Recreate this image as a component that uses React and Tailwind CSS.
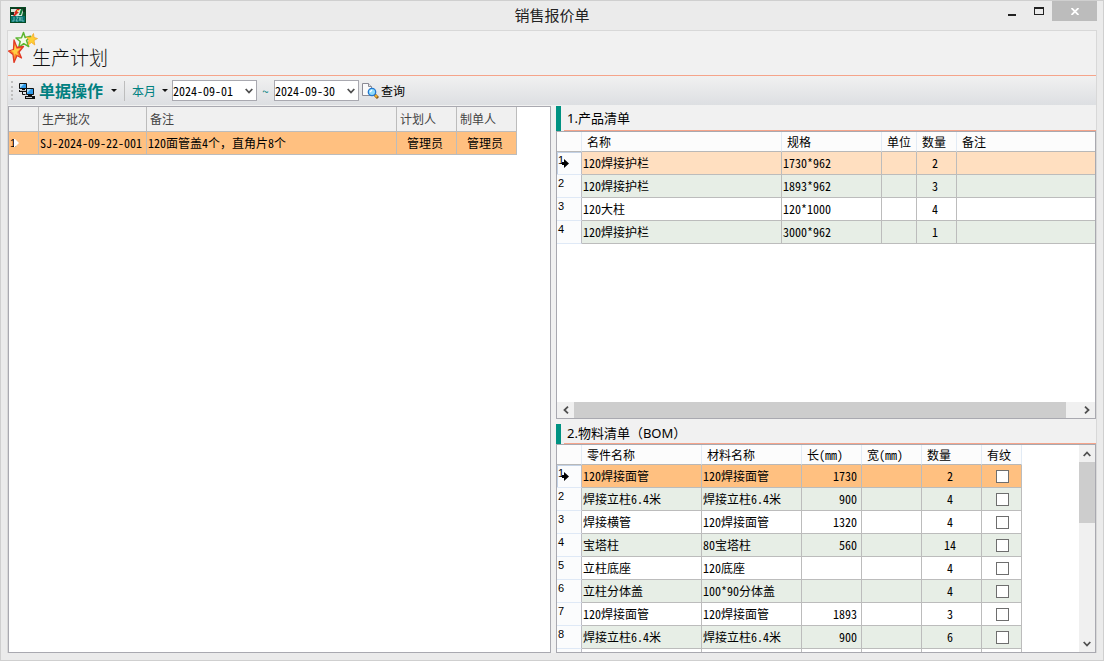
import clsx from "clsx"

const productRows = [
    { name: "120焊接护栏", spec: "1730*962", unit: "", qty: 2, remark: "" },
    { name: "120焊接护栏", spec: "1893*962", unit: "", qty: 3, remark: "" },
    { name: "120大柱", spec: "120*1000", unit: "", qty: 4, remark: "" },
    { name: "120焊接护栏", spec: "3000*962", unit: "", qty: 1, remark: "" },
]

const bomRows = [
    { part: "120焊接面管", material: "120焊接面管", length: 1730, qty: 2 },
    { part: "焊接立柱6.4米", material: "焊接立柱6.4米", length: 900, qty: 4 },
    { part: "焊接横管", material: "120焊接面管", length: 1320, qty: 4 },
    { part: "宝塔柱", material: "80宝塔柱", length: 560, qty: 14 },
    { part: "立柱底座", material: "120底座", length: "", qty: 4 },
    { part: "立柱分体盖", material: "100*90分体盖", length: "", qty: 4 },
    { part: "120焊接面管", material: "120焊接面管", length: 1893, qty: 3 },
    { part: "焊接立柱6.4米", material: "焊接立柱6.4米", length: 900, qty: 6 },
    { part: "", material: "", length: "", qty: "" },
]

const AppLogo = () => (
    <svg width="16" height="16" viewBox="0 0 16 16" className="block">
        <rect width="16" height="16" fill="#064a22" />
        <rect x="1" y="1" width="14" height="8" fill="#d9e6dc" />
        <path d="M1 1h14v1H1z M1 8h3V5H1z M12 2h3v3h-2z" fill="#12331f" />
        <path d="M4 6 7 2h3L7 5h2L5 9H3l2-3z" fill="#d8261b" />
        <path d="M7 3h2L7 5z" fill="#f2d23a" />
        <path d="M11 2h2l-2 6H9l1-3z" fill="#087a35" />
        <path d="M13 5h2v4h-3z" fill="#0b5a2c" />
        <rect x="1" y="9" width="14" height="6" fill="#06726d" />
        <path d="M4 10v4H2M6 10h2l-2 4h2M9 10l2 4M11 10l-2 4M12 10v4h2" fill="none" stroke="#8fd0cd" strokeWidth="0.7" />
    </svg>
)

const StarsIcon = () => (
    <svg width="30" height="32" viewBox="0 0 30 32" className="block">
        <path d="M15.500 1.500l1.600 5 5.400-1.200-4 4.200 2.200 6-5-2.800-5 3.800 1.500-6-4.200-3.500 5.500-.2z" fill="#f4fbe8" stroke="#5cb531" strokeWidth="1.500" strokeLinejoin="round" />
        <path d="M25.500 2.500l.5 4 3.500 1-3.500 2 .8 4.500-3.300-2.500-3.500 2.500 1-5-2.500-3 4.500.5z" fill="#fdd035" stroke="#f4a72a" strokeWidth="0.8" strokeLinejoin="round" />
        <path d="M6 9l3 7.500 6.500-1-4.500 5.500 2.500 6-4.500-2.500L6 31.500l-1-8-4.500-3.500 5-1.500z" fill="#f98a2b" stroke="#e23a26" strokeWidth="1.300" strokeLinejoin="round" />
        <path d="M7 14l1.500 4 4-.5-3.500 3.500 1 3.500-3-2-1 3-.5-4-2.500-2 3-.5z" fill="#ffce45" />
    </svg>
)

const ComputersIcon = () => (
    <svg width="16" height="16" viewBox="0 0 16 16" className="block">
        <path d="M.5 .5h7v5h-7z" fill="#2f9bea" stroke="#111" />
        <path d="M1 1h4L1 5z" fill="#a8ddfb" />
        <path d="M0 7h9v2H0z M3 6h3v1H3z" fill="#111" />
        <path d="M1 7h6v1H1z" fill="#c9c9c9" />
        <path d="M3.500 9v2.500h3" fill="none" stroke="#111" />
        <path d="M7.500 5.500h7v6h-7z" fill="#2f9bea" stroke="#111" />
        <path d="M8 6h4l-4 4z" fill="#a8ddfb" />
        <path d="M6 13h10v3H6z M9 12h4v1H9z" fill="#111" />
        <path d="M7 14h6v1H7z" fill="#c9c9c9" />
    </svg>
)

const SearchPageIcon = () => (
    <svg width="17" height="16" viewBox="0 0 17 16" className="block">
        <path d="M.5 .5h6l3 3v9h-9z" fill="#fafafa" stroke="#8b8b95" />
        <path d="M6.500 .5v3h3" fill="#e3e3e8" stroke="#8b8b95" />
        <path d="M12 11l4 4" stroke="#8a5a14" strokeWidth="3" />
        <path d="M13 12l2 2" stroke="#f0b02c" strokeWidth="2" />
        <circle cx="10" cy="9" r="3.700" fill="#8fdcfb" stroke="#2277cf" strokeWidth="1.300" />
        <path d="M8 9l2-2" stroke="#fff" strokeWidth="1.200" />
    </svg>
)

const Chevron = ({ className }) => (
    <svg width="8" height="8" viewBox="0 0 8 8" className={clsx("block", className)}>
        <path d="M.7 2l3.300 3.500L7.300 2" fill="none" stroke="#505050" strokeWidth="1.800" />
    </svg>
)

const Caret = () => (
    <svg width="6" height="3" viewBox="0 0 6 3" className="block">
        <path d="M0 0h6L3 3z" fill="#111" />
    </svg>
)

const DateSelect = ({ label, value }) => (
    <div className="relative">
        <select
            aria-label={label}
            defaultValue={value}
            className="block h-[21px] w-[85px] appearance-none border border-[#a9a9b0] bg-white text-xs text-black"
        >
            <option>{value}</option>
        </select>
        <Chevron className="pointer-events-none absolute right-1 top-[7px]" />
    </div>
)

const SectionTitle = ({ children, className }) => (
    <div className="flex shrink-0">
        <div className="w-[5px] bg-[#009282]" />
        <h2 className={clsx("ml-[3px] flex-1 border-b border-[#f5a48a] pl-[3px] font-['Noto_Sans','Noto_Sans_CJK_SC',sans-serif] text-[13px] text-black", className)}>
            {children}
        </h2>
    </div>
)

const HeadCell = ({ children, className }) => (
    <th className={clsx("h-5 border-b border-r border-b-[#b8b8b8] border-r-[#e2ebf5] bg-[#fcfcfc] p-0 pl-[5px] text-left font-normal", className)}>
        {children}
    </th>
)

const Cell = ({ children, className }) => (
    <td className={clsx("h-[23px] overflow-hidden border-b border-r border-[#bcbcbc] p-0 pl-px", className)}>
        {children}
    </td>
)

// grey gutter on the left of each grid with the row number and current-row marker
const RowNumber = ({ number, current }) => (
    <td
        className={clsx(
            "h-[23px] border-b border-r border-b-[#dfe9f6] border-r-[#bcbcc4] bg-[#fbfcfd] p-0 align-top",
            current && "shadow-[inset_1px_1px_0_#c3d2e6]"
        )}
    >
        <div className="flex pl-px font-['Liberation_Sans',sans-serif] text-[11px] leading-4">
            <span className={current ? "w-1" : ""}>{number}</span>
            {current && (
                <svg width="7" height="9" viewBox="0 0 7 9" className="mt-[7px] block">
                    <path d="M0 3h2V0l5 4.500L2 9V6H0z" fill="#000" />
                </svg>
            )}
        </div>
    </td>
)

const rowColor = (index, selected) => (index === 0 ? selected : index % 2 ? "bg-[#e7eee6]" : "bg-white")

const PlanTable = () => (
    <table className="w-[508px] table-fixed border-separate border-spacing-0">
        <colgroup>
            <col className="w-[30px]" />
            <col className="w-[108px]" />
            <col className="w-[250px]" />
            <col className="w-[60px]" />
            <col className="w-[60px]" />
        </colgroup>
        <thead>
            <tr className="bg-[#f0f0f0] text-[#444]">
                <th className="h-[25px] border-b border-r border-[#bcbcbc]" aria-label="行号" />
                {["生产批次", "备注", "计划人", "制单人"].map((title) => (
                    <th key={title} className="border-b border-r border-[#bcbcbc] p-0 pl-[3px] text-left font-normal">{title}</th>
                ))}
            </tr>
        </thead>
        <tbody>
            <tr className="bg-[#ffc080] whitespace-nowrap">
                <Cell>
                    <div className="flex items-center font-['Liberation_Sans',sans-serif] text-[11px] leading-4">
                        <span className="w-1">1</span>
                        <svg width="5" height="8" viewBox="0 0 5 8" className="block">
                            <path d="M0 0h1l4 4-4 4H0z" fill="#fff" />
                        </svg>
                    </div>
                </Cell>
                <Cell>SJ-2024-09-22-001</Cell>
                <Cell>120面管盖4个，直角片8个</Cell>
                <Cell className="pr-1 text-center">管理员</Cell>
                <Cell className="pr-1 text-center">管理员</Cell>
            </tr>
        </tbody>
    </table>
)

const ProductTable = () => (
    <table className="w-full table-fixed border-separate border-spacing-0">
        <colgroup>
            <col className="w-[25px]" />
            <col className="w-[200px]" />
            <col className="w-[100px]" />
            <col className="w-[35px]" />
            <col className="w-10" />
            <col />
        </colgroup>
        <thead>
            <tr>
                <HeadCell className="border-r-[#bcbcbc]" />
                <HeadCell>名称</HeadCell>
                <HeadCell>规格</HeadCell>
                <HeadCell>单位</HeadCell>
                <HeadCell>数量</HeadCell>
                <HeadCell className="border-r-0">备注</HeadCell>
            </tr>
        </thead>
        <tbody>
            {productRows.map((row, index) => (
                <tr key={index} className={rowColor(index, "bg-[#ffdfc0]")}>
                    <RowNumber number={index + 1} current={index === 0} />
                    <Cell>{row.name}</Cell>
                    <Cell>{row.spec}</Cell>
                    <Cell>{row.unit}</Cell>
                    <Cell className="pr-1 text-center">{row.qty}</Cell>
                    <Cell className="border-r-0">{row.remark}</Cell>
                </tr>
            ))}
        </tbody>
    </table>
)

const BomTable = () => (
    <table className="w-[465px] table-fixed border-separate border-spacing-0">
        <colgroup>
            <col className="w-[25px]" />
            <col className="w-[120px]" />
            <col className="w-[100px]" />
            <col className="w-[60px]" />
            <col className="w-[60px]" />
            <col className="w-[60px]" />
            <col className="w-10" />
        </colgroup>
        <thead>
            <tr>
                <HeadCell className="border-r-[#bcbcbc]" />
                <HeadCell>零件名称</HeadCell>
                <HeadCell>材料名称</HeadCell>
                <HeadCell>长(mm)</HeadCell>
                <HeadCell>宽(mm)</HeadCell>
                <HeadCell>数量</HeadCell>
                <HeadCell>有纹</HeadCell>
            </tr>
        </thead>
        <tbody>
            {bomRows.map((row, index) => (
                <tr key={index} className={rowColor(index, "bg-[#ffc080]")}>
                    <RowNumber number={row.part ? index + 1 : ""} current={index === 0} />
                    <Cell>{row.part}</Cell>
                    <Cell>{row.material}</Cell>
                    <Cell className="pr-1 text-right">{row.length}</Cell>
                    <Cell />
                    <Cell className="pr-1 text-center">{row.qty}</Cell>
                    <Cell>
                        <input
                            type="checkbox"
                            aria-label={`有纹 ${index + 1}`}
                            className="mx-auto block size-[13px] appearance-none border border-[#6e6e6e] bg-white"
                        />
                    </Cell>
                </tr>
            ))}
        </tbody>
    </table>
)

const App = () => {
    return (
        <div className="flex h-screen flex-col overflow-hidden border border-[#cfcfcf] bg-[#ebebeb] px-1.5 pb-[7px] font-['Noto_Sans_Mono_CJK_SC','Noto_Sans_CJK_SC',monospace] text-xs leading-4 text-black">
            <header className="grid h-[29px] shrink-0 grid-cols-[1fr_auto_1fr]">
                <div className="pl-[3px] pt-1.5">
                    <AppLogo />
                </div>
                <h1 className="pt-1 font-['Noto_Sans_CJK_SC',sans-serif] text-[15px] leading-5 text-[#222]">销售报价单</h1>
                <div className="flex items-start justify-end">
                    <button aria-label="最小化" className="flex h-5 w-7 items-center justify-center">
                        <svg width="8" height="10" viewBox="0 0 8 10"><path d="M0 8h8v2H0z" fill="#222" /></svg>
                    </button>
                    <button aria-label="最大化" className="flex h-5 w-[26px] items-center justify-center">
                        <svg width="10" height="8" viewBox="0 0 10 8"><path d="M0 0h10v8H0zM1 2v5h8V2z" fill="#222" fillRule="evenodd" /></svg>
                    </button>
                    <button aria-label="关闭" className="flex h-5 w-[45px] items-center justify-center bg-[#bcbcbc]">
                        <svg width="8" height="7" viewBox="0 0 8 7"><path d="M.5 0l7 7M7.500 0l-7 7" stroke="#fff" strokeWidth="1.800" /></svg>
                    </button>
                </div>
            </header>

            <main className="flex min-h-0 flex-1 flex-col border border-b-0 border-[#d8d8d8] bg-[#f1f1f1]">
                <div className="flex h-[45px] shrink-0 border-b border-[#f5a48a]">
                    <StarsIcon />
                    <h2 className="-ml-1.5 pt-3 font-['Noto_Sans_CJK_SC',sans-serif] text-[19px] font-light leading-7 text-[#111]">生产计划</h2>
                </div>

                <div className="flex h-[29px] shrink-0 items-center bg-linear-to-b from-[#f1f1f1] to-[#dddfe2] pl-[3px] text-[#008080]">
                    <div className="mr-1.5 h-[19px] border-l-2 border-dotted border-[#bdbdbd]" />
                    <button className="flex items-center gap-1">
                        <ComputersIcon />
                        <span className="pb-0.5 font-['Noto_Sans_CJK_SC',sans-serif] text-base font-bold leading-5">单据操作</span>
                        <span className="ml-1"><Caret /></span>
                    </button>
                    <div className="mx-[7px] h-5 w-px bg-[#bdbdbd]" />
                    <button className="flex items-center gap-1.5">
                        本月
                        <Caret />
                    </button>
                    <div className="ml-1 flex items-center">
                        <DateSelect label="开始日期" value="2024-09-01" />
                        <span className="w-[17px] text-center">~</span>
                        <DateSelect label="结束日期" value="2024-09-30" />
                    </div>
                    <button className="ml-[3px] flex items-center gap-0.5 text-black">
                        <SearchPageIcon />
                        查询
                    </button>
                </div>

                <div className="mt-px grid min-h-0 flex-1 grid-cols-[543fr_540fr] gap-[5px]">
                    <section aria-label="生产计划" className="overflow-hidden border border-[#a9a9b0] bg-white">
                        <PlanTable />
                    </section>

                    <div className="grid min-h-0 grid-rows-[313fr_229fr] gap-[5px]">
                        <section className="flex min-h-0 flex-col">
                            <SectionTitle className="leading-6">1.产品清单</SectionTitle>
                            <div className="flex min-h-0 flex-1 flex-col border border-[#a9a9b0] bg-white">
                                <div className="min-h-0 flex-1 overflow-hidden">
                                    <ProductTable />
                                </div>
                                <div className="flex h-4 shrink-0 bg-[#f0f0f0]">
                                    <button aria-label="向左" className="flex w-[17px] items-center justify-center"><Chevron className="rotate-90" /></button>
                                    <div className="flex-1 pr-3">
                                        <div className="h-full bg-[#cdcdcd]" />
                                    </div>
                                    <button aria-label="向右" className="flex w-[17px] items-center justify-center"><Chevron className="-rotate-90" /></button>
                                </div>
                            </div>
                        </section>

                        <section className="flex min-h-0 flex-col">
                            <SectionTitle className="leading-[19px]">2.物料清单（BOM）</SectionTitle>
                            <div className="flex min-h-0 flex-1 border border-[#a9a9b0] bg-white">
                                <div className="min-w-0 flex-1 overflow-hidden">
                                    <BomTable />
                                </div>
                                <div className="flex w-4 shrink-0 flex-col bg-[#f0f0f0]">
                                    <button aria-label="向上" className="flex h-[17px] items-center justify-center"><Chevron className="rotate-180" /></button>
                                    <div className="flex-1">
                                        <div className="h-[35%] bg-[#cdcdcd]" />
                                    </div>
                                    <button aria-label="向下" className="flex h-[17px] items-center justify-center"><Chevron /></button>
                                </div>
                            </div>
                        </section>
                    </div>
                </div>
            </main>
        </div>
    )
}

export default App
